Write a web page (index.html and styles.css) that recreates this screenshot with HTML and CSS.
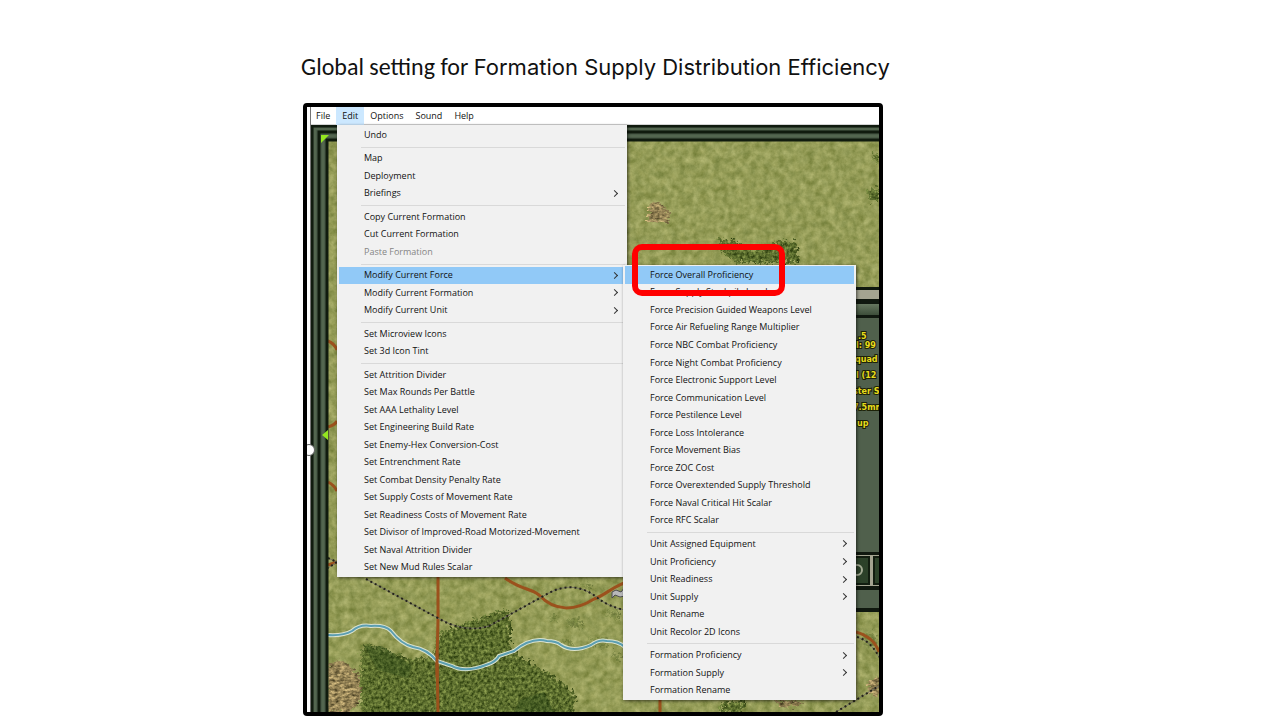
FILE: index.html
```html
<!DOCTYPE html>
<html lang="en">
<head>
<meta charset="utf-8">
<meta name="viewport" content="width=device-width, initial-scale=1">
<title>Formation Supply Distribution Efficiency</title>
<link rel="stylesheet" href="styles.css">
</head>
<body>
<main class="slide">
  <h1 class="title"><span class="title-lead">Global setting for </span><span class="title-topic">Formation Supply Distribution Efficiency</span></h1>
  <section class="shot" aria-label="Game window">
    <svg class="map" viewBox="307 107 572 605" preserveAspectRatio="xMinYMin slice" aria-hidden="true">
      <defs>
        <filter id="grass" x="0" y="0" width="100%" height="100%" color-interpolation-filters="sRGB">
          <feTurbulence type="fractalNoise" baseFrequency="0.14" numOctaves="4" seed="4" result="n"/>
          <feColorMatrix in="n" type="matrix" values="0.3 0.08 0 0 0.39  0.26 0.08 0 0 0.44  0.26 0.1 0 0 0.16  0 0 0 0 1"/>
          <feComposite in2="SourceGraphic" operator="in"/>
        </filter>
        <filter id="woods" x="-5%" y="-5%" width="110%" height="110%" color-interpolation-filters="sRGB">
          <feTurbulence type="fractalNoise" baseFrequency="0.32" numOctaves="3" seed="9" result="n"/>
          <feColorMatrix in="n" type="matrix" values="0.6 0 0 0 0.06  0.6 0 0 0 0.13  0.4 0 0 0 -0.02  0 0 0 0 1" result="c"/>
          <feDisplacementMap in="SourceGraphic" in2="n" scale="14" xChannelSelector="R" yChannelSelector="G" result="d"/>
          <feComposite in="c" in2="d" operator="in"/>
        </filter>
        <filter id="rock" x="-5%" y="-5%" width="110%" height="110%" color-interpolation-filters="sRGB">
          <feTurbulence type="fractalNoise" baseFrequency="0.2 0.35" numOctaves="3" seed="2" result="n"/>
          <feColorMatrix in="n" type="matrix" values="0.9 0 0 0 0.14  0.8 0 0 0 0.12  0.6 0 0 0 0.04  0 0 0 0 1" result="c"/>
          <feDisplacementMap in="SourceGraphic" in2="n" scale="10" xChannelSelector="R" yChannelSelector="G" result="d"/>
          <feComposite in="c" in2="d" operator="in"/>
        </filter>
        <linearGradient id="bar" x1="0" y1="0" x2="0" y2="1">
          <stop offset="0" stop-color="#66775f"/><stop offset="1" stop-color="#3d4e3a"/>
        </linearGradient>
      </defs>
      <rect x="307" y="107" width="572" height="605" fill="#fff"/>
      <rect x="328" y="141" width="551" height="571" fill="#949b58" filter="url(#grass)"/>

      <g filter="url(#woods)">
        <path d="M718 238l16 3 20 10 26-10 16 0 2 22h-60l-18-12z"/>
        <path d="M362 644l16 3 30 12 24-2 8-24 24-10 40-13 6 4 0 32 12 13 36 20 17 16-2 20H362l-2-30z"/>
        <path d="M868 190l12-2v12l-10 2zM872 155l8-2v12zM722 702h26l-8 10h-20z"/>
      </g>
      <path d="M364 646l18 0 30 20-4 12-30-8zM520 700l24-8 10 20h-40z" fill="#203c12" opacity=".35"/>
      <g filter="url(#woods)" opacity=".4">
        <path d="M566 620l12-3 6 8-14 3zM590 640l16-4 4 9-16 2zM560 642l10-3 4 8zM604 612l14-2 0 10zM578 586l10-3 5 7zM548 618l8-2 4 7zM610 655l10-2v8zM862 636l10-4 7 12-12 3zM862 622l14 2z"/>
      </g>
      <g filter="url(#rock)">
        <path d="M650 203l10-1 10 12-2 8-20-1z"/>
        <path d="M328 664l14-4 18 16 0 24-10 12h-22z"/>
        <path d="M868 682l11-6v22l-10-4zM774 701h30l-6 6-20-1z"/>
      </g>

      <g fill="none" stroke="#9b511d" stroke-width="3">
        <path d="M438 575l0 45-1 40 1 52M505 578c16 12 26 10 34 17 16 17 36 16 55 4 12-4 20-14 36-18M660 695v17M856 632q18 5 23 20"/>
        <path d="M328 341q6 2 9 9M328 427q7-2 9-6M328 482q6 3 9 9M328 565l9-3"/>
      </g>
      <path d="M328 635q15 1 24-4 8-7 19-5 14-1 20 5 10 13 22 16 14 2 24 14l15 5q13 7 34-1 10-3 13-9l15-5q17-14 33-10 9 0 14 4 12 8 30 0 8-6 16-4 11 0 18 6l8 2" fill="none" stroke="#dbe3cf" stroke-width="4"/>
      <path d="M328 635q15 1 24-4 8-7 19-5 14-1 20 5 10 13 22 16 14 2 24 14l15 5q13 7 34-1 10-3 13-9l15-5q17-14 33-10 9 0 14 4 12 8 30 0 8-6 16-4 11 0 18 6l8 2" fill="none" stroke="#5b9eb2" stroke-width="2"/>
      <path d="M437 653v24" stroke="#9b511d" stroke-width="3"/>
      <path d="M366 579l70 38q28 17 53 9l60-33q26-14 50 6 9 7 25 11M836 712l43-26M857 637q14 4 22 20M328 558l9 4-9 6" fill="none" stroke="#777764"/>
      <path d="M366 579l70 38q28 17 53 9l60-33q26-14 50 6 9 7 25 11M836 712l43-26M857 637q14 4 22 20M328 558l9 4-9 6" fill="none" stroke="#24231b" stroke-width="2" stroke-dasharray="2 3"/>
      <path d="M612 592l4-2 5 2 4-5v9l-5 1-5-2-3 3z" fill="#b8b8ba" stroke="#4b4b50"/>

      <g>
        <path d="M311 125h568v16H328v571h-17z" fill="#4a5c48"/>
        <path d="M312 712V126h567M319 712V132h560M327 712V140h552" fill="none" stroke="#101b0e" stroke-width="3"/>
        <path d="M315 712V129h564M323 712V136h556" fill="none" stroke="#53664f" stroke-width="2"/>
        <path d="M310.500 107v605" stroke="#747474"/>
        <path d="M311 124.500h568" stroke="#d4d4d4"/>
        <path d="M321 135h8l-8 8zM328 430v10l-6-5z" fill="#94e620"/>
      </g>

      <g>
        <rect x="850" y="287" width="29" height="325" fill="#10180f"/>
        <rect x="850" y="290" width="29" height="9" fill="#a4a491"/>
        <rect x="850" y="304" width="29" height="11" fill="url(#bar)"/>
        <rect x="850" y="318" width="29" height="234" fill="#50604c"/>
        <rect x="850" y="555" width="29" height="31" fill="#a4a491"/>
        <rect x="846" y="557" width="23" height="27" fill="#2c4129" stroke="#121d10" stroke-width="2"/>
        <rect x="874" y="557" width="10" height="27" fill="#2c4129" stroke="#121d10" stroke-width="2"/>
        <circle cx="857" cy="570" r="5" fill="none" stroke="#a3aa93" stroke-width="2"/>
        <rect x="850" y="590" width="29" height="18" fill="#50604c"/>
        <g class="readout">
          <text x="858" y="339">.5</text>
          <text x="856" y="348">l: 99</text>
          <text x="855" y="362">quad</text>
          <text x="856" y="378">l (12</text>
          <text x="853" y="394">ster S</text>
          <text x="853" y="410">7.5mm</text>
          <text x="857" y="426">up</text>
        </g>
      </g>
      <circle cx="309" cy="450" r="5.500" fill="#fff" stroke="#626262"/>
    </svg>

    <nav class="menubar" aria-label="Menu bar">
      <button type="button">File</button>
      <button type="button" class="open">Edit</button>
      <button type="button">Options</button>
      <button type="button">Sound</button>
      <button type="button">Help</button>
    </nav>

    <div class="menu menu-edit" role="menu" aria-label="Edit">
      <button type="button">Undo</button>
      <hr>
      <button type="button">Map</button>
      <button type="button">Deployment</button>
      <button type="button" class="more">Briefings</button>
      <hr>
      <button type="button">Copy Current Formation</button>
      <button type="button">Cut Current Formation</button>
      <button type="button" disabled>Paste Formation</button>
      <hr>
      <button type="button" class="more selected">Modify Current Force</button>
      <button type="button" class="more">Modify Current Formation</button>
      <button type="button" class="more">Modify Current Unit</button>
      <hr>
      <button type="button">Set Microview Icons</button>
      <button type="button">Set 3d Icon Tint</button>
      <hr>
      <button type="button">Set Attrition Divider</button>
      <button type="button">Set Max Rounds Per Battle</button>
      <button type="button">Set AAA Lethality Level</button>
      <button type="button">Set Engineering Build Rate</button>
      <button type="button">Set Enemy-Hex Conversion-Cost</button>
      <button type="button">Set Entrenchment Rate</button>
      <button type="button">Set Combat Density Penalty Rate</button>
      <button type="button">Set Supply Costs of Movement Rate</button>
      <button type="button">Set Readiness Costs of Movement Rate</button>
      <button type="button">Set Divisor of Improved-Road Motorized-Movement</button>
      <button type="button">Set Naval Attrition Divider</button>
      <button type="button">Set New Mud Rules Scalar</button>
    </div>

    <div class="menu menu-force" role="menu" aria-label="Modify Current Force">
      <button type="button" class="selected">Force Overall Proficiency</button>
      <button type="button">Force Supply Stockpile Level</button>
      <button type="button">Force Precision Guided Weapons Level</button>
      <button type="button">Force Air Refueling Range Multiplier</button>
      <button type="button">Force NBC Combat Proficiency</button>
      <button type="button">Force Night Combat Proficiency</button>
      <button type="button">Force Electronic Support Level</button>
      <button type="button">Force Communication Level</button>
      <button type="button">Force Pestilence Level</button>
      <button type="button">Force Loss Intolerance</button>
      <button type="button">Force Movement Bias</button>
      <button type="button">Force ZOC Cost</button>
      <button type="button">Force Overextended Supply Threshold</button>
      <button type="button">Force Naval Critical Hit Scalar</button>
      <button type="button">Force RFC Scalar</button>
      <hr>
      <button type="button" class="more">Unit Assigned Equipment</button>
      <button type="button" class="more">Unit Proficiency</button>
      <button type="button" class="more">Unit Readiness</button>
      <button type="button" class="more">Unit Supply</button>
      <button type="button">Unit Rename</button>
      <button type="button">Unit Recolor 2D Icons</button>
      <hr>
      <button type="button" class="more">Formation Proficiency</button>
      <button type="button" class="more">Formation Supply</button>
      <button type="button">Formation Rename</button>
    </div>
    <div class="callout"></div>
  </section>
</main>
</body>
</html>
```
FILE: styles.css
```css
* { box-sizing: border-box; }
body {
  margin: 0;
  background: #fff;
  color: #111;
  font-family: "Open Sans", "Noto Sans", sans-serif;
}
.slide { padding: 52px 0 4px 301px; }
.title {
  margin: 0;
  font-family: Carlito, Lato, sans-serif;
  font-size: 22px;
  line-height: 30px;
  font-weight: 400;
  white-space: nowrap;
}
.title-lead { font-size: 24px; }
.title-topic { font-family: Inter, sans-serif; }
.shot {
  position: relative;
  width: 100%;
  max-width: 580px;
  aspect-ratio: 580 / 613;
  margin: 20px 0 0 2px;
  border: 4px solid #000;
  border-radius: 4px;
}
.map {
  position: absolute;
  inset: 0;
  width: 100%;
  height: 100%;
}
.readout {
  font: 700 8px "DejaVu Sans", sans-serif;
  fill: #e8dc1c;
  stroke: #1c2208;
  stroke-width: 2px;
  paint-order: stroke;
}
button {
  border: 0;
  margin: 0;
  background: none;
  color: #111;
  font: inherit;
  text-align: left;
  white-space: nowrap;
}
.menubar {
  position: relative;
  display: flex;
  height: 18px;
  margin-left: 3px;
  font-size: 9px;
}
.menubar button { padding: 0 6px; line-height: 18px; }
.menubar .open { background: #cce8ff; }
.menu {
  position: absolute;
  display: flex;
  flex-direction: column;
  padding: 1px 2px;
  background: #f1f1f1;
  font-size: 9px;
  box-shadow: 1px 1px 3px #0009;
}
.menu-edit { left: 30px; top: 18px; width: 290px; height: 452px; }
.menu-force { left: 316px; top: 158px; width: 233px; height: 435px; }
.menu button {
  display: flex;
  flex: 1;
  align-items: center;
  justify-content: space-between;
  min-height: 0;
  padding: 0 8px 0 25px;
  line-height: 16px;
}
.menu button:disabled { color: #858585; }
.menu .selected { background: #91c9f7; }
.menu hr {
  flex: none;
  width: auto;
  height: 6px;
  margin: 0 0 0 22px;
  border: 0;
  background: linear-gradient(#d9d9d9, #d9d9d9) 0 3px / 100% 1px no-repeat;
}
.more::after {
  content: "";
  width: 4px;
  height: 4px;
  border: solid #333;
  border-width: 1px 1px 0 0;
  transform: rotate(45deg);
}
.callout {
  position: absolute;
  left: 325px;
  top: 137px;
  width: 153px;
  height: 52px;
  border: 6px solid #f00;
  border-radius: 10px;
}
```
